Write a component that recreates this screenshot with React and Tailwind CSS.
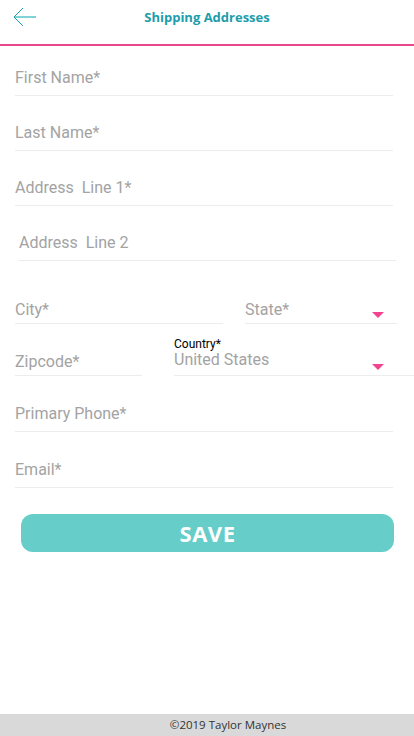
const roboto = { fontFamily: "Roboto, 'Noto Sans', sans-serif" };

function Field({ label, className = "", textClass = "" }) {
  return (
    <div className={"border-b border-[#ececec] " + className}>
      <div className={"text-[16px] leading-[19px] text-[#a3a3a3] " + textClass}>{label}</div>
    </div>
  );
}

function Caret({ className }) {
  return (
    <svg width="12" height="7" viewBox="0 0 12 7" className={"absolute " + className}>
      <path d="M0 0 H12 L6 6 Z" fill="#f0448f" />
    </svg>
  );
}

export default function App() {
  return (
    <div
      className="w-[414px] min-h-[736px] bg-white flex flex-col"
      style={{ fontFamily: "'Open Sans', 'Noto Sans', sans-serif" }}
    >
      {/* header */}
      <div className="relative h-[46px] border-b-2 border-[#e9468c] flex items-center justify-center">
        <svg width="26" height="22" viewBox="0 0 26 22" className="absolute left-[11px] top-[6px]">
          <path d="M3 11 H25" stroke="#7fd3d6" strokeWidth="2" />
          <path d="M12 2 L3 11 L12 20" stroke="#1aa0ad" strokeWidth="1" fill="none" />
        </svg>
        <h1 className="text-[13px] font-bold text-[#1c9dab] -mt-[8px]">Shipping Addresses</h1>
      </div>

      {/* form */}
      <div style={roboto}>
        <Field label="First Name*" className="ml-[15px] w-[378px] pt-[22px] pb-[8px]" />
        <Field label="Last Name*" className="ml-[15px] w-[378px] pt-[27px] pb-[8px]" />
        <Field label="Address  Line 1*" className="ml-[15px] w-[378px] pt-[27px] pb-[8px] whitespace-pre" />
        <Field label="Address  Line 2" className="ml-[18px] w-[378px] pt-[27px] pb-[8px] whitespace-pre" textClass="pl-[1px]" />

        <div className="flex items-end mt-[39px]">
          <Field label="City*" className="ml-[15px] w-[208px] pb-[4px]" />
          <div className="relative ml-[22px] w-[152px] border-b border-[#ececec] pb-[4px]">
            <div className="text-[16px] leading-[19px] text-[#a3a3a3]">State*</div>
            <Caret className="right-[13px] bottom-[4px]" />
          </div>
        </div>

        <div className="flex items-end">
          <Field label="Zipcode*" className="ml-[15px] w-[127px] pb-[4px]" />
          <div className="relative ml-[32px] flex-1 border-b border-[#ececec] pb-[6px]">
            <div className="text-[12px] leading-[14px] text-black pt-[13px]">Country*</div>
            <div className="text-[16px] leading-[19px] text-[#a3a3a3] -mt-[1px]">United States</div>
            <Caret className="right-[30px] bottom-[4px]" />
          </div>
        </div>

        <Field label="Primary Phone*" className="ml-[15px] w-[378px] pt-[28px] pb-[8px]" />
        <Field label="Email*" className="ml-[15px] w-[378px] pt-[28px] pb-[8px]" />
      </div>

      <div className="pl-[21px] pr-[20px] pt-[26px]">
        <button className="w-full h-[38px] rounded-[12px] bg-[#66cdc8] text-white text-[22px] font-bold leading-none tracking-[0.5px]">
          SAVE
        </button>
      </div>

      <footer className="mt-auto h-[22px] bg-[#d9d9d9] flex items-center justify-center pl-[42px] text-[11.5px] text-[#333]">
        ©2019 Taylor Maynes
      </footer>
    </div>
  );
}
